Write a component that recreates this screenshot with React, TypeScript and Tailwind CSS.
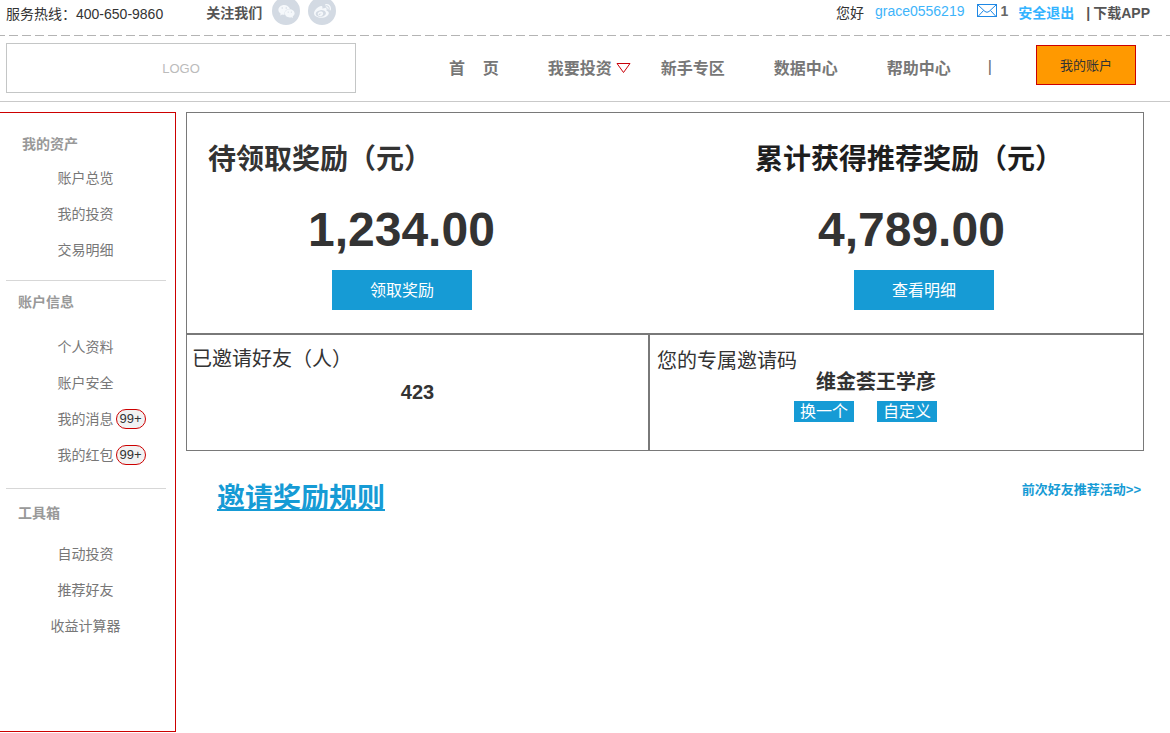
import { ReactNode } from 'react';
import clsx from 'clsx';
import { FaWeibo, FaWeixin } from 'react-icons/fa';

interface MenuItem {
  label: string;
  badge?: string;
}

interface MenuSection {
  title: string;
  titleClass: string;
  listClass: string;
  items: MenuItem[];
}

const navLinks = [
  { label: '首\u00a0\u00a0\u00a0\u00a0页' },
  { label: '我要投资', hasMenu: true },
  { label: '新手专区' },
  { label: '数据中心' },
  { label: '帮助中心' },
];

const sections: MenuSection[] = [
  {
    title: '我的资产',
    titleClass: 'pt-[21px] pl-[22px]',
    listClass: 'pt-1.5 pb-3',
    items: [{ label: '账户总览' }, { label: '我的投资' }, { label: '交易明细' }],
  },
  {
    title: '账户信息',
    titleClass: 'pt-[11px] pl-[18px]',
    listClass: 'pt-[17px] pb-[15px]',
    items: [
      { label: '个人资料' },
      { label: '账户安全' },
      { label: '我的消息', badge: '99+' },
      { label: '我的红包', badge: '99+' },
    ],
  },
  {
    title: '工具箱',
    titleClass: 'pt-[14px] pl-[18px]',
    listClass: 'pt-[13px] pb-[87px]',
    items: [{ label: '自动投资' }, { label: '推荐好友' }, { label: '收益计算器' }],
  },
];

function SocialLink({ label, children }: Readonly<{ label: string; children: ReactNode }>) {
  return (
    <a
      href="#"
      aria-label={label}
      className="flex size-7 items-center justify-center rounded-full bg-[#d3dae3] text-[#f5f8fb]"
    >
      {children}
    </a>
  );
}

function TopBar() {
  return (
    <div className="flex h-[35px] items-start pr-5 pl-1.5 text-sm">
      <p className="leading-7 text-[#333]">服务热线：400-650-9860</p>
      <p className="ml-[43px] leading-[26px] font-bold text-[#555]">关注我们</p>
      <div className="-mt-[3px] ml-2.5 flex gap-2">
        <SocialLink label="微信">
          <FaWeixin className="size-[17px]" />
        </SocialLink>
        <SocialLink label="微博">
          <FaWeibo className="size-[17px]" />
        </SocialLink>
      </div>
      <div className="ml-auto flex items-start leading-[26px]">
        <span className="text-[#333]">您好</span>
        <a href="#" className="ml-[11px] leading-[22px] text-[#3eb4fa]">
          grace0556219
        </a>
        <a href="#" className="ml-[13px] flex items-center gap-[3px] leading-[22px] font-bold text-[#666]">
          <svg viewBox="0 0 20 14" className="h-[14px] w-5" fill="none" stroke="#1e88e5">
            <rect x="0.5" y="0.5" width="19" height="12" />
            <path d="M1 1l7 6.5q2 1.600 4 0L19 1M1 12.500l5.500-6M19 12.500l-5.500-6" />
          </svg>
          1
        </a>
        <a href="#" className="ml-2.5 font-bold text-[#33b3ff]">
          安全退出
        </a>
        <span className="ml-3 font-bold text-[#555]">|</span>
        <a href="#" className="ml-[3px] font-bold text-[#555]">
          下载APP
        </a>
      </div>
    </div>
  );
}

function Header() {
  return (
    <header>
      <TopBar />
      <div className="h-px bg-[repeating-linear-gradient(90deg,#b4b4b4_0_5px,transparent_5px_9px,#b4b4b4_9px_13px)]" />
      <div className="flex h-[66px] items-start border-b border-[#c9c9c9] pr-[34px] pl-1.5">
        <div className="mt-[7px] flex h-[50px] w-[350px] items-center justify-center border border-[#c4c6c6] pt-0.5 text-[13px] text-[#bbb]">
          LOGO
        </div>
        <nav className="ml-auto flex gap-[49px] text-base leading-[66px] font-bold text-[#777]">
          {navLinks.map((link) => (
            <a key={link.label} href="#" className="relative whitespace-nowrap">
              {link.label}
              {link.hasMenu && (
                <svg
                  viewBox="0 0 15 11"
                  className="absolute top-[27px] left-full ml-1 h-[11px] w-[15px]"
                  fill="none"
                  stroke="#c9000a"
                >
                  <path d="M1 0.500h13L7.500 9.500z" />
                </svg>
              )}
            </a>
          ))}
        </nav>
        <span className="ml-[37px] text-base leading-[62px] text-[#666]">|</span>
        <button
          type="button"
          className="mt-[9px] ml-11 h-10 w-[100px] border border-[#c00] bg-[#f90] pt-0.5 text-[13px] text-[#333]"
        >
          我的账户
        </button>
      </div>
    </header>
  );
}

function Sidebar() {
  return (
    <aside className="w-44 shrink-0 border border-l-0 border-[#c00] text-sm">
      {sections.map((section, i) => (
        <section key={section.title}>
          {i > 0 && <hr className="mr-[9px] ml-1.5 border-[#d7d7d7]" />}
          <h2 className={clsx('leading-5 font-bold text-[#999]', section.titleClass)}>
            {section.title}
          </h2>
          <ul className={clsx('pr-1 text-center leading-9 text-[#777]', section.listClass)}>
            {section.items.map((item) => (
              <li key={item.label}>
                <a href="#" className="relative inline-block">
                  {item.label}
                  {item.badge && (
                    <span className="absolute top-2 left-full ml-0.5 h-5 w-[30px] rounded-full border border-[#c00] bg-[#f2f2f2] text-[13px] leading-[18px] text-[#333]">
                      {item.badge}
                    </span>
                  )}
                </a>
              </li>
            ))}
          </ul>
        </section>
      ))}
    </aside>
  );
}

function RewardPanel() {
  return (
    <div className="border border-[#797979]">
      <div className="flex justify-between pt-[27px] pr-20 pb-[23px] pl-[21px]">
        <div>
          <h2 className="text-[28px] leading-10 font-bold text-[#333]">待领取奖励（元）</h2>
          <p className="mt-[22px] pl-[100px] text-5xl leading-[56px] font-bold text-[#333]">1,234.00</p>
          <button
            type="button"
            className="mt-3 ml-[124px] block h-10 w-[140px] bg-[#169bd5] pt-0.5 text-base text-white"
          >
            领取奖励
          </button>
        </div>
        <div>
          <h2 className="text-[28px] leading-10 font-bold text-[#1e1e1e]">累计获得推荐奖励（元）</h2>
          <p className="mt-[22px] pl-[63px] text-5xl leading-[56px] font-bold text-[#333]">4,789.00</p>
          <button
            type="button"
            className="mt-3 ml-[99px] block h-10 w-[140px] bg-[#169bd5] pt-0.5 text-base text-white"
          >
            查看明细
          </button>
        </div>
      </div>
      <div className="grid grid-cols-[462fr_494fr] border-t-2 border-[#797979] text-xl leading-5 text-[#333]">
        <div className="border-r border-[#797979] pt-3.5 pl-[5px]">
          <h3>已邀请好友（人）</h3>
          <p className="mt-[13px] pr-[5px] text-center font-bold">423</p>
        </div>
        <div className="border-l border-[#797979] pt-4 pb-7 pl-[7px]">
          <h3>您的专属邀请码</h3>
          <p className="mt-px pl-[159px] font-bold">维金荟王学彦</p>
          <div className="mt-[9px] flex gap-[23px] pl-[137px] text-base">
            <button type="button" className="h-[21px] w-[60px] bg-[#169bd5] pt-px leading-5 text-white">
              换一个
            </button>
            <button type="button" className="h-[21px] w-[60px] bg-[#169bd5] pt-px leading-5 text-white">
              自定义
            </button>
          </div>
        </div>
      </div>
    </div>
  );
}

export default function App() {
  return (
    <div className="bg-white font-['Liberation_Sans','Noto_Sans_CJK_SC',sans-serif]">
      <Header />
      <div className="flex items-start gap-2.5 pt-2.5 pr-[26px]">
        <Sidebar />
        <main className="grow">
          <RewardPanel />
          <div className="flex items-start justify-between pt-7 pr-[3px] pl-[31px] font-bold text-[#169bd5]">
            <a href="#" className="text-[28px] leading-10 underline decoration-2 underline-offset-1">
              邀请奖励规则
            </a>
            <a href="#" className="text-[13px] leading-[22px]">
              前次好友推荐活动&gt;&gt;
            </a>
          </div>
        </main>
      </div>
    </div>
  );
}
